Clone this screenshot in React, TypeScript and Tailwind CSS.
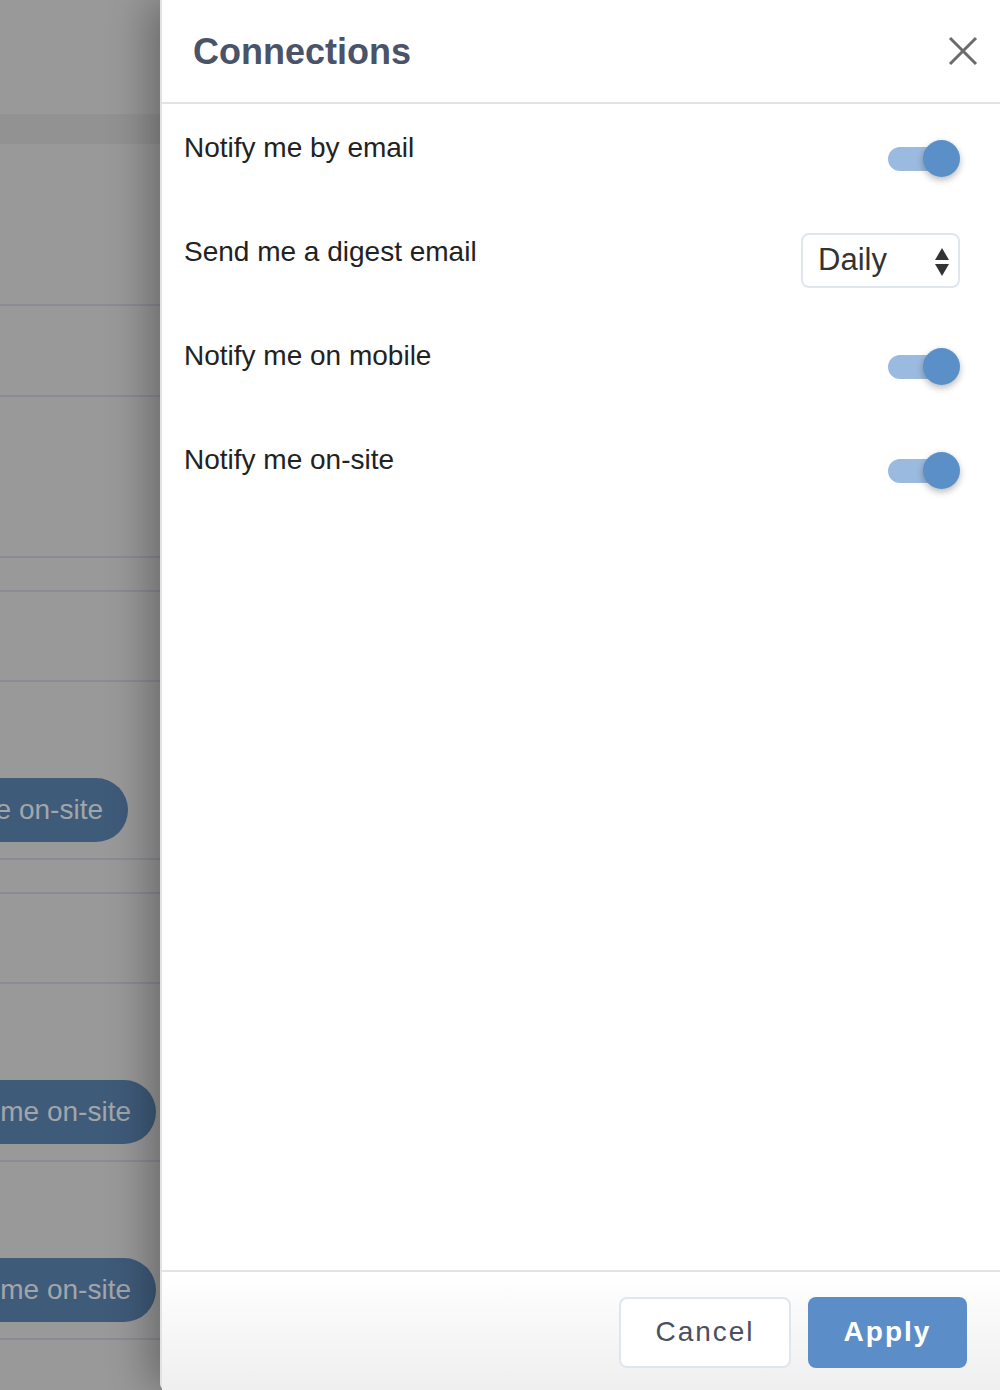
import React, { useState } from 'react'

type Pref = { key: string; label: string }

const prefs: Pref[] = [
  { key: 'email', label: 'Notify me by email' },
  { key: 'digest', label: 'Send me a digest email' },
  { key: 'mobile', label: 'Notify me on mobile' },
  { key: 'onsite', label: 'Notify me on-site' },
]

function Toggle({ on, onChange }: { on: boolean; onChange: () => void }) {
  return (
    <button onClick={onChange} className="relative w-[72px] h-[37px] mt-[4px] shrink-0">
      <span className="absolute left-0 top-[7px] w-[62px] h-6 rounded-full bg-[#9bbadf]" />
      <span
        className={`absolute top-0 w-[37px] h-[37px] rounded-full shadow-[0_3px_7px_rgba(0,0,0,0.28)] ${
          on ? 'right-0 bg-[#5b8fc8]' : 'left-0 bg-[#f5f5f5]'
        }`}
      />
    </button>
  )
}

function Pill({ right }: { right: string }) {
  return (
    <div className={`flex justify-end overflow-hidden whitespace-nowrap ${right}`}>
      <div className="shrink-0 h-16 rounded-full bg-[#3f5b7a] text-[#a3a6a9] text-[28px] flex items-center pl-6 pr-[25px]">
        Notify me on-site
      </div>
    </div>
  )
}

export default function App() {
  const [toggles, setToggles] = useState<Record<string, boolean>>({ email: true, mobile: true, onsite: true })
  const [digest, setDigest] = useState('Daily')

  return (
    <div
      className="flex w-[1000px] h-[1390px] overflow-hidden bg-[#999999]"
      style={{ fontFamily: '"Liberation Sans", Arial, sans-serif' }}
    >
      {/* page behind the drawer */}
      <div className="w-[160px] shrink-0 flex flex-col">
        <div className="h-[114px]" />
        <div className="h-[30px] bg-[#929292]" />
        <div className="h-[162px] border-b-2 border-[#898d93]" />
        <div className="h-[91px] border-b-2 border-[#898d93]" />
        <div className="h-[161px] border-b-2 border-[#898d93]" />
        <div className="h-[34px] border-b-2 border-[#898d93]" />
        <div className="h-[90px] border-b-2 border-[#898d93]" />
        <div className="h-[178px] border-b-2 border-[#898d93] flex flex-col justify-end pb-4">
          <Pill right="mr-[32px]" />
        </div>
        <div className="h-[34px] border-b-2 border-[#898d93]" />
        <div className="h-[90px] border-b-2 border-[#898d93]" />
        <div className="h-[178px] border-b-2 border-[#898d93] flex flex-col justify-end pb-4">
          <Pill right="mr-[4px]" />
        </div>
        <div className="h-[178px] border-b-2 border-[#898d93] flex flex-col justify-end pb-4">
          <Pill right="mr-[4px]" />
        </div>
      </div>

      {/* drawer */}
      <div className="relative flex-1 flex flex-col bg-white border-l-2 border-[#e2e2e2] rounded-bl-md shadow-[-12px_0_40px_rgba(0,0,0,0.3)]">
        <div className="h-[104px] shrink-0 flex items-center justify-between pl-[31px] pr-[22px] border-b-2 border-[#e3e3e3]">
          <h1 className="text-[36px] font-bold text-[#4a5368] mt-[2px]">Connections</h1>
          <button className="w-[30px] h-[30px] flex items-center justify-center">
            <svg width="30" height="30" viewBox="0 0 30 30">
              <path d="M2 2 L28 28 M28 2 L2 28" stroke="#6b6b6b" strokeWidth="3" />
            </svg>
          </button>
        </div>

        <div className="flex-1 flex flex-col pl-[22px] pr-[40px]">
          {prefs.map(p => (
            <div key={p.key} className="h-[104px] flex items-center justify-between">
              <span className="text-[28px] leading-8 text-[#222222] mb-4">{p.label}</span>
              {p.key === 'digest' ? (
                <div className="relative w-[159px] h-[55px] rounded-lg border-2 border-[#e0e6ed] flex items-center pl-[15px]">
                  <select
                    value={digest}
                    onChange={e => setDigest(e.target.value)}
                    className="absolute inset-0 opacity-0"
                  >
                    <option>Daily</option>
                    <option>Weekly</option>
                  </select>
                  <span className="text-[31px] text-[#333333]">{digest}</span>
                  <svg className="absolute right-[8px] top-[12px]" width="16" height="30" viewBox="0 0 16 30">
                    <path d="M8 1 L15 13 L1 13 Z" fill="#333333" />
                    <path d="M1 17 L15 17 L8 29 Z" fill="#333333" />
                  </svg>
                </div>
              ) : (
                <Toggle on={!!toggles[p.key]} onChange={() => setToggles(t => ({ ...t, [p.key]: !t[p.key] }))} />
              )}
            </div>
          ))}
        </div>

        <div className="h-[120px] shrink-0 border-t-2 border-[#e3e3e3] bg-gradient-to-b from-white to-[#efefef] flex items-center justify-end gap-[17px] pr-[33px] pt-[2px]">
          <button className="w-[172px] h-[71px] rounded-lg border-2 border-[#e0e6ed] bg-white text-[28px] tracking-[2px] text-[#4a5060]">
            Cancel
          </button>
          <button className="w-[159px] h-[71px] rounded-lg bg-[#5b8ec8] text-[28px] font-bold tracking-[2px] text-white">
            Apply
          </button>
        </div>
      </div>
    </div>
  )
}
